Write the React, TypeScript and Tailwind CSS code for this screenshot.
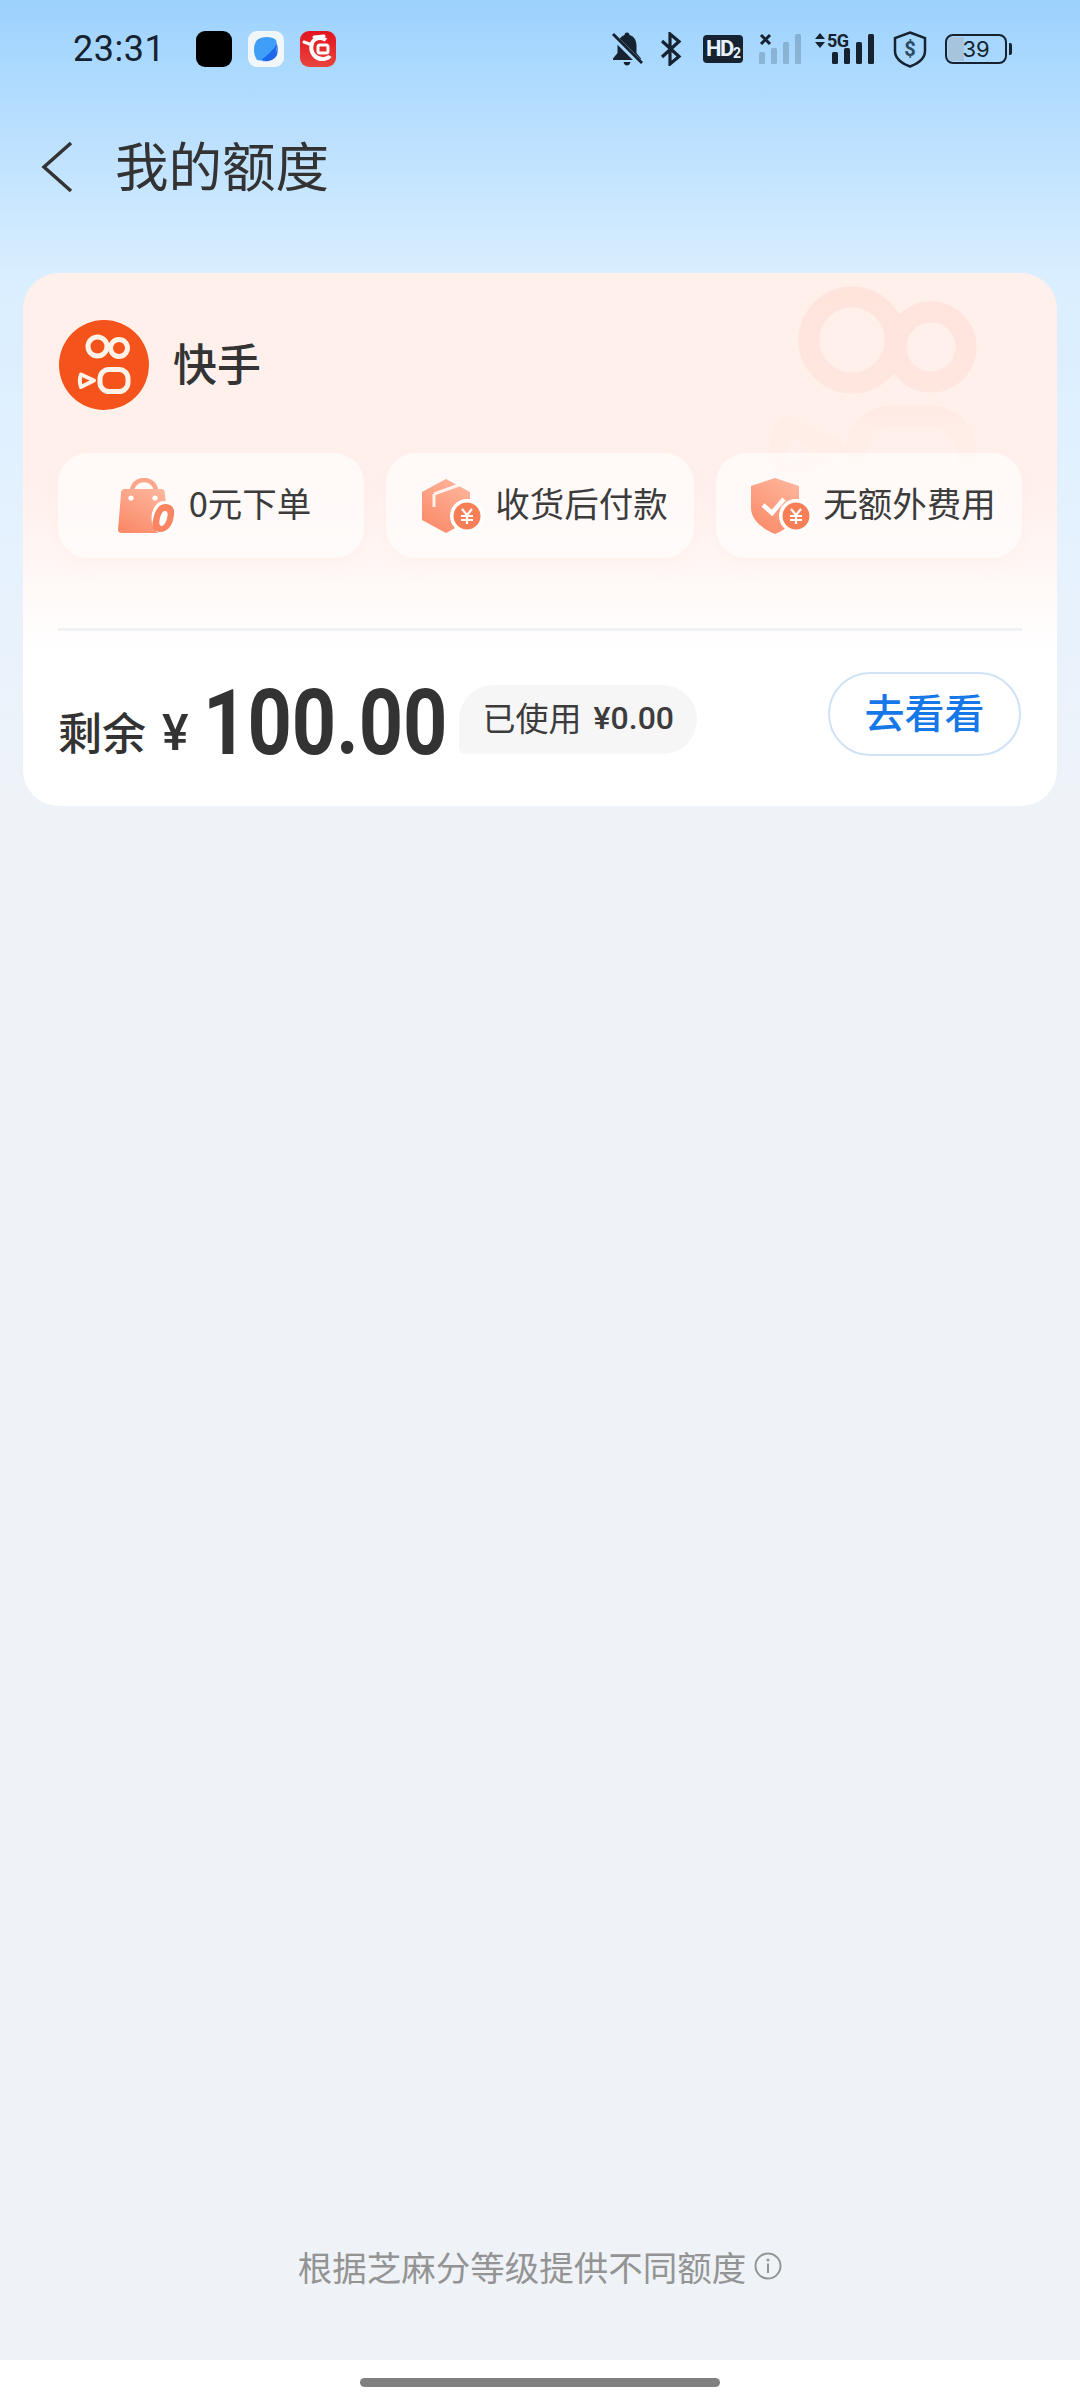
const cjk = "font-['Noto_Sans_CJK_SC','Noto_Sans',sans-serif]";

function KuaishouMark() {
  return (
    <svg width="90" height="90" viewBox="0 0 90 90" className="shrink-0">
      <circle cx="45" cy="45" r="45" fill="#f4531c" />
      <g fill="none" stroke="#fff3e8" strokeWidth="5">
        <circle cx="38.500" cy="26.500" r="9.500" />
        <circle cx="60" cy="28" r="8.500" />
        <rect x="41" y="49.500" width="28" height="22" rx="9" />
        <path d="M22 54.500 L35 60.500 L22 67 C20.500 63 20.500 58.500 22 54.500 Z" strokeWidth="4" strokeLinejoin="round" />
      </g>
    </svg>
  );
}

function Watermark() {
  return (
    <svg width="240" height="190" viewBox="0 0 240 190" className="absolute right-[60px] top-[10px]">
      <defs>
        <linearGradient id="wmFade" gradientUnits="userSpaceOnUse" x1="0" y1="0" x2="0" y2="190">
          <stop offset="0" stopColor="#ffe4dc" />
          <stop offset="0.55" stopColor="#ffe6df" />
          <stop offset="0.72" stopColor="#ffece6" />
          <stop offset="1" stopColor="#fff0ea" />
        </linearGradient>
      </defs>
      <g fill="none" stroke="url(#wmFade)" strokeWidth="21">
        <circle cx="95" cy="57" r="43" />
        <circle cx="174" cy="64" r="35" />
        <rect x="99" y="133" width="110" height="90" rx="36" />
      </g>
      <path d="M28 142 L80 166 L28 192 C19 175 19 158 28 142 Z" fill="none" stroke="#ffeee8" strokeWidth="18" strokeLinejoin="round" />
    </svg>
  );
}

function Gradients() {
  return (
    <svg width="0" height="0" className="absolute">
      <defs>
        <linearGradient id="chipOrange" x1="0.8" y1="0" x2="0.2" y2="1">
          <stop offset="0" stopColor="#ffb59c" />
          <stop offset="1" stopColor="#f98a68" />
        </linearGradient>
      </defs>
    </svg>
  );
}

function BagIcon() {
  return (
    <svg width="58" height="56" viewBox="0 0 58 56" className="shrink-0">
      <path d="M14 14 C14 -2 38 -2 38 14" fill="none" stroke="#fca78c" strokeWidth="4.500" />
      <path d="M7 11 H43 C46 11 47 13 47 16 L50 52 C50 54 48 55 46 55 H4 C2 55 0 54 0 52 L3 16 C3 13 4 11 7 11 Z" fill="url(#chipOrange)" />
      <circle cx="13" cy="20" r="2.600" fill="#fff" />
      <circle cx="37" cy="20" r="2.600" fill="#fff" />
      <ellipse cx="46" cy="40" rx="12.500" ry="17" fill="#fff" />
      <path fillRule="evenodd" d="M47 26 C54 26 57 30 56 37 C55 47 50 54 42 54 C36 54 33 49 35 42 C37 32 41 26 47 26 Z M47 33 C44 33 42 38 41.500 43 C41 47 42 48 43.500 48 C46 48 49 43 49.500 38 C50 34 49 33 47 33 Z" fill="#f98562" />
    </svg>
  );
}

function YenBadge({ cx, cy }: { cx: number; cy: number }) {
  return (
    <g>
      <circle cx={cx} cy={cy} r="17" fill="#fff" />
      <circle cx={cx} cy={cy} r="13.500" fill="#f67f58" />
      <path d={`M${cx - 5} ${cy - 7} L${cx} ${cy - 1} L${cx + 5} ${cy - 7} M${cx - 6} ${cy} H${cx + 6} M${cx - 6} ${cy + 4} H${cx + 6} M${cx} ${cy - 1} V${cy + 8}`} fill="none" stroke="#fff" strokeWidth="2.200" />
    </g>
  );
}

function BoxIcon() {
  return (
    <svg width="62" height="54" viewBox="0 0 62 54" className="shrink-0">
      <path d="M24 0 L48 13 V41 L24 54 L0 41 V13 Z" fill="url(#chipOrange)" strokeLinejoin="round" />
      <path d="M12 15 L37 6 M12 15 V28" fill="none" stroke="#fff" strokeWidth="3" opacity="0.850" />
      <YenBadge cx={45} cy={37} />
    </svg>
  );
}

function ShieldIcon() {
  return (
    <svg width="62" height="56" viewBox="0 0 62 56" className="shrink-0">
      <path d="M24 0 L48 8 V30 C48 42 36 51 24 56 C12 51 0 42 0 30 V8 Z" fill="url(#chipOrange)" />
      <path d="M12 27 L21 35 L33 21" fill="none" stroke="#fff" strokeWidth="4.500" />
      <YenBadge cx={45} cy={38} />
    </svg>
  );
}

function StatusIcons() {
  const ink = '#16222f';
  return (
    <div className="flex items-center">
      {/* bell off */}
      <svg width="32" height="36" viewBox="0 0 32 36">
        <path d="M16 1.500 C17.500 1.500 18.500 2.500 18.500 4 C23.500 5.500 25.500 9.500 25.500 15 V22 L30 27.500 V29 H2 V27.500 L6.500 22 V15 C6.500 9.500 9.500 5.500 13.500 4 C13.500 2.500 14.500 1.500 16 1.500 Z M12.500 31 H19.500 C19 33.500 17.500 34.500 16 34.500 C14.500 34.500 13 33.500 12.500 31 Z" fill={ink} />
        <path d="M1 4 L30 33" stroke="#a9d8ff" strokeWidth="6" />
        <path d="M2 3 L31 32" stroke={ink} strokeWidth="3" />
      </svg>
      {/* bluetooth */}
      <svg width="22" height="34" viewBox="0 0 22 34" className="ml-[17px]">
        <path d="M2 9 L19 24.500 L10 32 V2 L19 9.500 L2 25" fill="none" stroke={ink} strokeWidth="3.200" />
      </svg>
      <div className="ml-[21px] flex h-[28px] w-[40px] items-center justify-center rounded-[4px] bg-[#16222f] pl-[1px] font-['Roboto',sans-serif] text-[#e6f3ff]">
        <span className="text-[22px] leading-none font-bold tracking-[-1.5px]">HD</span>
        <span className="mt-[7px] text-[14px] leading-none font-bold">2</span>
      </div>
      {/* sim 2, no service */}
      <svg width="44" height="32" viewBox="0 0 44 32" className="ml-[16px]">
        <path d="M2 2 L11 11 M11 2 L2 11" stroke={ink} strokeWidth="3" />
        <g fill="#16222f" opacity="0.2">
          <rect x="0" y="19" width="6" height="12" rx="1.500" />
          <rect x="12" y="15" width="6" height="16" rx="1.500" />
          <rect x="24" y="9" width="6" height="22" rx="1.500" />
          <rect x="36" y="1" width="6" height="30" rx="1.500" />
        </g>
      </svg>
      {/* sim 1, 5G */}
      <div className="relative ml-[12px] h-[32px] w-[60px]">
        <svg width="60" height="32" viewBox="0 0 60 32" className="absolute top-0 left-0">
          <path d="M0 6 L5 0 L10 6 Z M0 9 H10 L5 15 Z" fill={ink} />
          <g fill={ink}>
            <rect x="17" y="19" width="6" height="12" rx="1.500" />
            <rect x="29" y="15" width="6" height="16" rx="1.500" />
            <rect x="41" y="9" width="6" height="22" rx="1.500" />
            <rect x="53" y="1" width="6" height="30" rx="1.500" />
          </g>
        </svg>
        <span className="absolute top-[-1px] left-[12px] font-['Roboto',sans-serif] text-[18px] leading-none font-bold tracking-[-0.5px] text-[#16222f]">5G</span>
      </div>
      {/* vpn shield */}
      <svg width="34" height="37" viewBox="0 0 34 37" className="ml-[18px]">
        <path d="M17 1.500 L32 7 V20 C32 27 25 32.500 17 35.500 C9 32.500 2 27 2 20 V7 Z" fill="none" stroke={ink} strokeWidth="2.500" />
        <text x="17" y="25" textAnchor="middle" fontSize="20" fontWeight="700" fontFamily="Roboto, sans-serif" fill="#2d4a63">$</text>
      </svg>
      {/* battery */}
      <div className="ml-[18px] flex items-center gap-[2px]">
        <div className="relative flex h-[30px] w-[62px] items-center justify-center overflow-hidden rounded-[8px] border-[2.5px] border-[#16222f]">
          <div className="absolute top-[1px] bottom-[1px] left-[1px] w-[16px] rounded-l-[4px] bg-[#a8c4dc]" />
          <span className="relative font-['Inter',sans-serif] text-[22px] leading-none text-[#16222f]">39</span>
        </div>
        <div className="h-[12px] w-[3px] rounded-r-[2px] bg-[#16222f]" />
      </div>
    </div>
  );
}

function StatusBar() {
  return (
    <div className="flex h-[96px] shrink-0 items-center justify-between pt-[2px] pr-[68px] pl-[73px]">
      <div className="flex items-center">
        <span className="w-[123px] font-['Roboto',sans-serif] text-[36px] leading-none tracking-[0.5px] text-[#16222f]">23:31</span>
        <div className="flex gap-[16px]">
          <div className="h-[36px] w-[36px] rounded-[9px] bg-black" />
          <div className="flex h-[36px] w-[36px] items-center justify-center rounded-[9px] bg-[#f1f6fb]">
            <svg width="28" height="28" viewBox="0 0 28 28">
              <path d="M5 5 C10 1 20 1 24 5 C27 13 22 23 12 26 L5 25 C1 19 1 10 5 5 Z" fill="#3f9ff8" />
              <path d="M25 9 C26 17 21 24 10 26 C15 27 22 26 25 20 C26 16 26 12 25 9 Z M25 9 C21 15 15 21 9 25 L18 25 C22 22 25 16 25 9 Z" fill="#1c68e8" />
            </svg>
          </div>
          <div className="flex h-[36px] w-[36px] items-center justify-center rounded-[9px] bg-[linear-gradient(180deg,#e3141f,#e8443c)]">
            <svg width="32" height="32" viewBox="0 0 32 32">
              <path d="M24 7 C19 3 11 5 9.500 12 C8 20 14 27 22 26 C25 25.500 27 24.500 28 23" fill="none" stroke="#fff" strokeWidth="4" />
              <path d="M2 9 L10 12 M12 4 L22 3" stroke="#fff" strokeWidth="3" strokeLinecap="round" />
              <rect x="16" y="12" width="10" height="8" rx="2" fill="none" stroke="#fff" strokeWidth="3" />
            </svg>
          </div>
        </div>
      </div>
      <StatusIcons />
    </div>
  );
}

function Header() {
  return (
    <div className="mt-[34px] flex h-[74px] shrink-0 items-center pl-[41px]">
      <svg width="32" height="52" viewBox="0 0 32 52" className="shrink-0">
        <path d="M30 2 L3 26 L30 50" fill="none" stroke="#333333" strokeWidth="3.500" />
      </svg>
      <h1 className={`mb-[6px] ml-[42px] text-[53.5px] leading-none font-normal text-[#333333] ${cjk}`}>我的额度</h1>
    </div>
  );
}

function Chip({ icon, label, className }: { icon: React.ReactNode; label: string; className: string }) {
  return (
    <div className={`flex h-[105px] items-center justify-center rounded-[30px] bg-white/60 shadow-[0_8px_16px_rgba(255,190,170,0.08)] ${className}`}>
      {icon}
      <span className={`mb-[6px] text-[34.5px] leading-none text-[#3c3c3c] ${cjk}`}>{label}</span>
    </div>
  );
}

function QuotaCard() {
  return (
    <div className="relative mx-[23px] mt-[69px] h-[533px] shrink-0 overflow-hidden rounded-[36px] bg-[linear-gradient(180deg,#fff0ec_0%,#fff0ec_40%,#ffffff_72%)]">
      <Watermark />
      <div className="relative flex items-center pt-[47px] pl-[36px]">
        <KuaishouMark />
        <span className={`mb-[6px] ml-[24px] text-[44px] leading-none font-medium text-[#333333] ${cjk}`}>快手</span>
      </div>
      <div className="relative mt-[43px] flex gap-[22px] pl-[35px]">
        <Chip icon={<BagIcon />} label="0元下单" className="w-[306px] gap-[13px] pl-[7px]" />
        <Chip icon={<BoxIcon />} label="收货后付款" className="w-[308px] gap-[11px] pl-[10px]" />
        <Chip icon={<ShieldIcon />} label="无额外费用" className="w-[306px] gap-[10px] pl-[9px]" />
      </div>
      <div className="relative mx-[35px] mt-[70px] h-[3px] bg-[#eff1f4]" />
      <div className="relative mt-[41px] flex items-end pr-[36px] pl-[35px]">
        <span className={`mb-[1px] text-[44px] leading-[48px] font-medium text-[#333333] ${cjk}`}>剩余</span>
        <span className="mb-[-1px] ml-[16px] font-['Roboto',sans-serif] text-[50px] leading-[48px] font-medium text-[#333333]">¥</span>
        <span className="mb-[-12px] ml-[14px] w-[256px] origin-left scale-x-[0.86] font-['Roboto',sans-serif] text-[90px] leading-[88px] font-bold text-[#333333]">100.00</span>
        <div className="mb-[2px] flex h-[69px] w-[238px] items-center gap-[12px] rounded-[35px] rounded-bl-[6px] bg-[#f6f6f6] pl-[24px]">
          <span className={`mb-[5px] text-[33px] leading-none text-[#3c3c3c] ${cjk}`}>已使用</span>
          <span className="mb-[3px] font-['Roboto',sans-serif] text-[32px] leading-none font-medium text-[#3c3c3c]">¥0.00</span>
        </div>
        <div className="ml-auto flex h-[84px] w-[193px] items-center justify-center rounded-[42px] border-2 border-[#cfe2f6]">
          <span className={`mb-[7px] text-[40px] leading-none font-medium text-[#1677e8] ${cjk}`}>去看看</span>
        </div>
      </div>
    </div>
  );
}

export default function App() {
  return (
    <div className="flex h-[2408px] w-[1080px] flex-col overflow-hidden bg-[linear-gradient(180deg,#9cd2fe_0px,#d9eeff_270px,#e6f2fe_560px,#eff3f8_820px)]">
      <Gradients />
      <StatusBar />
      <Header />
      <QuotaCard />
      <div className="flex flex-1 items-end justify-center pb-[70px]">
        <div className="flex items-center gap-[8px]">
          <span className={`text-[34.5px] leading-[48px] text-[#949494] ${cjk}`}>根据芝麻分等级提供不同额度</span>
          <svg width="28" height="28" viewBox="0 0 28 28" className="shrink-0">
            <circle cx="14" cy="14" r="12.500" fill="none" stroke="#949494" strokeWidth="2" />
            <circle cx="14" cy="8" r="1.500" fill="#949494" />
            <path d="M14 11.500 V21" stroke="#949494" strokeWidth="2" />
          </svg>
        </div>
      </div>
      <div className="flex h-[48px] shrink-0 justify-center bg-white pt-[18px]">
        <div className="h-[9px] w-[360px] rounded-full bg-[#808080]" />
      </div>
    </div>
  );
}
